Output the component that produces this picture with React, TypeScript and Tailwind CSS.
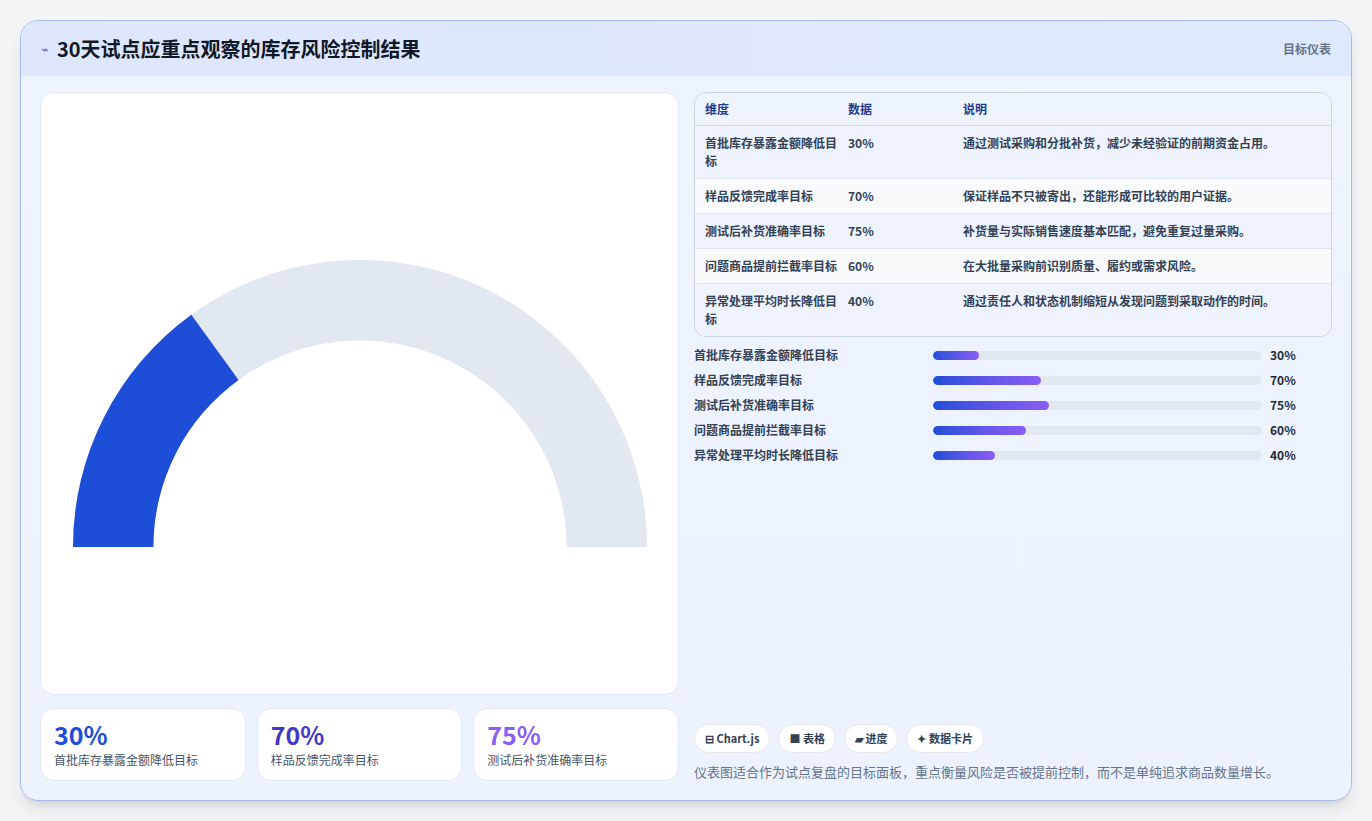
const rows = [
  { name: '首批库存暴露金额降低目标', v: 30, d: '通过测试采购和分批补货，减少未经验证的前期资金占用。' },
  { name: '样品反馈完成率目标', v: 70, d: '保证样品不只被寄出，还能形成可比较的用户证据。' },
  { name: '测试后补货准确率目标', v: 75, d: '补货量与实际销售速度基本匹配，避免重复过量采购。' },
  { name: '问题商品提前拦截率目标', v: 60, d: '在大批量采购前识别质量、履约或需求风险。' },
  { name: '异常处理平均时长降低目标', v: 40, d: '通过责任人和状态机制缩短从发现问题到采取动作的时间。' },
];

function arc(r1: number, r2: number, a0: number, a1: number) {
  // angles in degrees measured from the left end, clockwise over the top
  const cx = 300, cy = 300;
  const p = (r: number, a: number) => {
    const t = Math.PI - (a * Math.PI) / 180;
    return [cx + r * Math.cos(t), cy - r * Math.sin(t)];
  };
  const [x0, y0] = p(r1, a0);
  const [x1, y1] = p(r1, a1);
  const [x2, y2] = p(r2, a1);
  const [x3, y3] = p(r2, a0);
  return `M${x0} ${y0} A${r1} ${r1} 0 0 1 ${x1} ${y1} L${x2} ${y2} A${r2} ${r2} 0 0 0 ${x3} ${y3} Z`;
}

export default function App() {
  return (
    <div className="min-h-[821px] bg-[#f3f4f6] p-5" style={{ fontFamily: '"Noto Sans CJK SC", "Noto Sans", sans-serif' }}>
      <div className="h-[781px] rounded-[18px] border border-[#a9b9ea] bg-gradient-to-b from-[#eef4fe] to-[#edf3fe] shadow-lg overflow-hidden flex flex-col">
        <div className="h-[56px] bg-gradient-to-r from-[#dde6fd] to-[#dfe9fd] flex items-center justify-between px-5">
          <div className="flex items-center gap-[8px]">
            <span className="text-[#4f6bd8] text-[13px]">⌁</span>
            <h1 className="text-[20px] font-bold text-[#111827]">30天试点应重点观察的库存风险控制结果</h1>
          </div>
          <span className="text-[12px] font-semibold text-[#64748b]">目标仪表</span>
        </div>
        <div className="flex-1 flex gap-[15px] px-[19px] pt-[16px] pb-[19px]">
          <div className="w-[639px] flex flex-col gap-[13px]">
            <div className="h-[603px] bg-white rounded-[14px] border border-[#e2e8f0] flex items-start justify-center pt-[163px]">
              <svg width="580" height="292" viewBox="8 8 584 292">
                <path d={arc(289, 208, 0, 180)} fill="#e2e8f0" />
                <path d={arc(289, 208, 0, 54)} fill="#1d4ed8" />
              </svg>
            </div>
            <div className="flex gap-[11px]">
              {[
                ['30%', '首批库存暴露金额降低目标', 'text-[#1d4ed8]'],
                ['70%', '样品反馈完成率目标', 'text-[#4338ca]'],
                ['75%', '测试后补货准确率目标', 'text-[#8b5cf6]'],
              ].map(([v, l, c]) => (
                <div key={l} className="w-[206px] h-[73px] bg-white rounded-[14px] border border-[#e2e8f0] px-[13px] pt-[11px]">
                  <div className={`text-[25px] leading-[29px] font-bold ${c}`}>{v}</div>
                  <div className="text-[12px] text-[#475569] mt-[2px]">{l}</div>
                </div>
              ))}
            </div>
          </div>
          <div className="flex-1 flex flex-col">
            <div className="rounded-[12px] border border-[#cbd5e1] overflow-hidden text-[12px]">
              <div className="flex h-[33px] items-center bg-[#eef4fe] border-b border-[#d6dde8] font-semibold text-[#1e3a8a]">
                <div className="w-[153px] pl-[10px]">维度</div>
                <div className="w-[115px]">数据</div>
                <div className="flex-1">说明</div>
              </div>
              {rows.map((r, i) => (
                <div key={r.name} className={`flex py-[8px] leading-[18px] text-[#334155] ${i < 4 ? 'border-b border-[#dfe5ee]' : ''} ${i % 2 ? 'bg-[#f8fafc]' : 'bg-[#eef3fe]'}`}>
                  <div className="w-[153px] pl-[10px] pr-[8px] font-semibold">{r.name}</div>
                  <div className="w-[115px] font-semibold">{r.v}%</div>
                  <div className="flex-1 font-semibold pr-2">{r.d}</div>
                </div>
              ))}
            </div>
            <div className="mt-[10px] flex flex-col gap-[9px]">
              {rows.map((r) => (
                <div key={r.name} className="flex items-center h-[16px] text-[12px] font-semibold text-[#334155]">
                  <div className="w-[239px]">{r.name}</div>
                  <div className="w-[329px] h-[9px] rounded-full bg-[#e2e8f0] overflow-hidden">
                    <div className="h-full rounded-full bg-gradient-to-r from-[#1d4ed8] to-[#8b5cf6]" style={{ width: `${r.v * 0.47}%` }} />
                  </div>
                  <div className="ml-[8px] font-bold text-[#1f2937]">{r.v}%</div>
                </div>
              ))}
            </div>
            <div className="mt-auto">
              <div className="flex gap-[8px] text-[11px] font-semibold text-[#334155]">
                {['⊟ Chart.js', '■ 表格', '▰ 进度', '✦ 数据卡片'].map((t) => (
                  <span key={t} className="h-[29px] px-[10px] rounded-full bg-white border border-[#e5e7eb] flex items-center">{t}</span>
                ))}
              </div>
              <p className="mt-[9px] text-[13px] text-[#64748b]">仪表图适合作为试点复盘的目标面板，重点衡量风险是否被提前控制，而不是单纯追求商品数量增长。</p>
            </div>
          </div>
        </div>
      </div>
    </div>
  );
}
